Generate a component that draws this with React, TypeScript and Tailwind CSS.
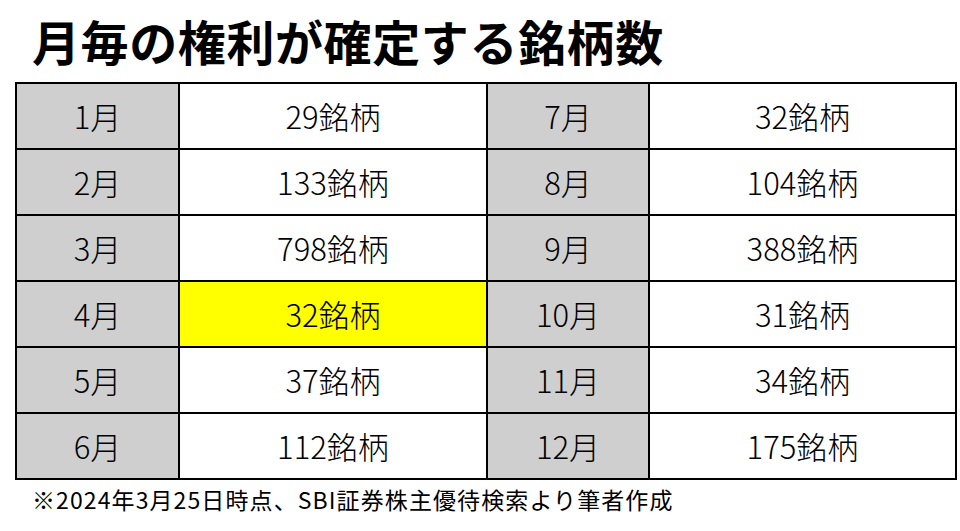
const rows = [
  { left: '1月', leftCount: '29銘柄', right: '7月', rightCount: '32銘柄' },
  { left: '2月', leftCount: '133銘柄', right: '8月', rightCount: '104銘柄' },
  { left: '3月', leftCount: '798銘柄', right: '9月', rightCount: '388銘柄' },
  { left: '4月', leftCount: '32銘柄', right: '10月', rightCount: '31銘柄', highlight: true },
  { left: '5月', leftCount: '37銘柄', right: '11月', rightCount: '34銘柄' },
  { left: '6月', leftCount: '112銘柄', right: '12月', rightCount: '175銘柄' },
];

const font = "font-['Noto_Sans_CJK_JP','Noto_Sans',sans-serif]";

export default function App() {
  return (
    <div className={`w-[960px] h-[531px] bg-white text-black ${font}`}>
      {/* Title */}
      <h1 className="pl-[32px] pt-[11px] h-[82px] text-[48px] leading-[58px] font-bold tracking-[0.6px]">
        月毎の権利が確定する銘柄数
      </h1>

      <table className="ml-[15px] w-[940px] table-fixed border-collapse border-2 border-black text-[31px] font-light">
        <colgroup>
          <col className="w-[163px]" />
          <col className="w-[308px]" />
          <col className="w-[162px]" />
          <col className="w-[307px]" />
        </colgroup>
        <tbody>
          {rows.map((row) => (
            <tr key={row.left} className="h-[66px]">
              <td className="border-2 border-black bg-[#cfcfcf] text-center">{row.left}</td>
              <td className={`border-2 border-black text-center ${row.highlight ? 'bg-[#ffff00]' : 'bg-white'}`}>
                {row.leftCount}
              </td>
              <td className="border-2 border-black bg-[#cfcfcf] text-center">{row.right}</td>
              <td className="border-2 border-black bg-white text-center">{row.rightCount}</td>
            </tr>
          ))}
        </tbody>
      </table>

      <p className="pl-[32px] pt-[4px] text-[23px] leading-[30px] tracking-[1.1px]">
        ※2024年3月25日時点、SBI証券株主優待検索より筆者作成
      </p>
    </div>
  );
}
